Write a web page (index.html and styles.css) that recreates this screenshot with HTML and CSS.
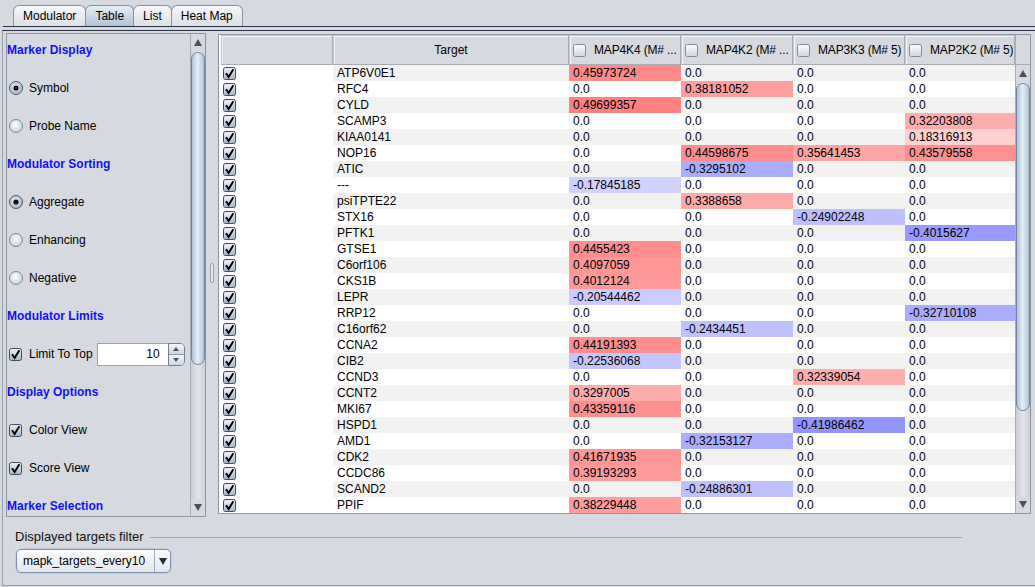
FILE: index.html
```html
<!DOCTYPE html>
<html>
<head>
<meta charset="utf-8">
<link rel="stylesheet" href="styles.css">
</head>
<body>
<svg class="defs" width="0" height="0">
  <defs>
    <linearGradient id="gcb" x1="0" y1="0" x2="0" y2="1">
      <stop offset="0" stop-color="#eef2f6"/>
      <stop offset="1" stop-color="#aab6c6"/>
    </linearGradient>
    <linearGradient id="gcbe" x1="0" y1="0" x2="0" y2="1">
      <stop offset="0" stop-color="#fbfcfd"/>
      <stop offset="1" stop-color="#d3d8df"/>
    </linearGradient>
    <radialGradient id="grd" cx="0.45" cy="0.4" r="0.6">
      <stop offset="0" stop-color="#ffffff"/>
      <stop offset="1" stop-color="#c9cfd8"/>
    </radialGradient>
    <radialGradient id="grs" cx="0.45" cy="0.4" r="0.6">
      <stop offset="0" stop-color="#eef1f5"/>
      <stop offset="1" stop-color="#a9b4c3"/>
    </radialGradient>
    <symbol id="chk" viewBox="0 0 13 13">
      <rect x="0.5" y="0.5" width="12" height="12" rx="2" fill="url(#gcb)" stroke="#3f4c60"/>
      <path d="M3 6.3 L5.6 10 L10.4 2.3" fill="none" stroke="#000" stroke-width="2" stroke-linejoin="miter"/>
    </symbol>
    <symbol id="unchk" viewBox="0 0 13 13">
      <rect x="0.5" y="0.5" width="12" height="12" rx="2" fill="url(#gcbe)" stroke="#7f8a9a"/>
    </symbol>
    <symbol id="rsel" viewBox="0 0 14 14">
      <circle cx="7" cy="7" r="6.5" fill="url(#grs)" stroke="#4b5668"/>
      <circle cx="7" cy="7" r="2.6" fill="#111"/>
    </symbol>
    <symbol id="roff" viewBox="0 0 14 14">
      <circle cx="7" cy="7" r="6.5" fill="url(#grd)" stroke="#7d8797"/>
    </symbol>
  </defs>
</svg>

<div class="tabs">
  <div class="tab">Modulator</div>
  <div class="tab sel">Table</div>
  <div class="tab">List</div>
  <div class="tab">Heat Map</div>
</div>

<div class="content">
  <div class="split">
    <div class="leftbox">
      <div class="opts">
        <div class="sec">Marker Display</div>
        <div class="opt"><svg class="rad" viewBox="0 0 14 14"><use href="#rsel"/></svg>Symbol</div>
        <div class="opt"><svg class="rad" viewBox="0 0 14 14"><use href="#roff"/></svg>Probe Name</div>
        <div class="sec">Modulator Sorting</div>
        <div class="opt"><svg class="rad" viewBox="0 0 14 14"><use href="#rsel"/></svg>Aggregate</div>
        <div class="opt"><svg class="rad" viewBox="0 0 14 14"><use href="#roff"/></svg>Enhancing</div>
        <div class="opt"><svg class="rad" viewBox="0 0 14 14"><use href="#roff"/></svg>Negative</div>
        <div class="sec">Modulator Limits</div>
        <div class="opt"><svg class="chkb" viewBox="0 0 13 13"><use href="#chk"/></svg>Limit To Top
          <div class="spinner"><div class="spin-field">10</div><div class="spin-btns"><div class="sb"><i class="tri up small"></i></div><div class="sb"><i class="tri down small"></i></div></div></div>
        </div>
        <div class="sec">Display Options</div>
        <div class="opt"><svg class="chkb" viewBox="0 0 13 13"><use href="#chk"/></svg>Color View</div>
        <div class="opt"><svg class="chkb" viewBox="0 0 13 13"><use href="#chk"/></svg>Score View</div>
        <div class="sec">Marker Selection</div>
      </div>
      <div class="vsb vsb-left">
        <div class="arrow"><i class="tri up"></i></div>
        <div class="track"><div class="thumb thumb-left"></div></div>
        <div class="arrow"><i class="tri down"></i></div>
      </div>
    </div>

    <div class="divider"><div class="grip"></div></div>

    <div class="pane">
      <div class="thead">
        <div class="th w0"></div>
        <div class="th w1 tgt">Target</div>
        <div class="th w2 mod"><svg class="chkb" viewBox="0 0 13 13"><use href="#unchk"/></svg><span>MAP4K4 (M# ...</span></div>
        <div class="th w2 mod"><svg class="chkb" viewBox="0 0 13 13"><use href="#unchk"/></svg><span>MAP4K2 (M# ...</span></div>
        <div class="th w2 mod"><svg class="chkb" viewBox="0 0 13 13"><use href="#unchk"/></svg><span>MAP3K3 (M# 5)</span></div>
        <div class="th w3 mod"><svg class="chkb" viewBox="0 0 13 13"><use href="#unchk"/></svg><span>MAP2K2 (M# 5)</span></div>
      </div>
      <div class="corner"></div>
      <div class="tbody">
        <table class="data">
          <colgroup><col class="cw0"><col class="cw1"><col class="cw2"><col class="cw2"><col class="cw2"><col class="cw3"></colgroup>
          <tbody>
            <tr><td class="c0"><svg class="cbx" viewBox="0 0 13 13"><use href="#chk"/></svg></td><td>ATP6V0E1</td><td style="background:#ff8a8a">0.45973724</td><td>0.0</td><td>0.0</td><td>0.0</td></tr>
            <tr><td class="c0"><svg class="cbx" viewBox="0 0 13 13"><use href="#chk"/></svg></td><td>RFC4</td><td>0.0</td><td style="background:#ff9e9e">0.38181052</td><td>0.0</td><td>0.0</td></tr>
            <tr><td class="c0"><svg class="cbx" viewBox="0 0 13 13"><use href="#chk"/></svg></td><td>CYLD</td><td style="background:#ff8080">0.49699357</td><td>0.0</td><td>0.0</td><td>0.0</td></tr>
            <tr><td class="c0"><svg class="cbx" viewBox="0 0 13 13"><use href="#chk"/></svg></td><td>SCAMP3</td><td>0.0</td><td>0.0</td><td>0.0</td><td style="background:#ffadad">0.32203808</td></tr>
            <tr><td class="c0"><svg class="cbx" viewBox="0 0 13 13"><use href="#chk"/></svg></td><td>KIAA0141</td><td>0.0</td><td>0.0</td><td>0.0</td><td style="background:#ffd0d0">0.18316913</td></tr>
            <tr><td class="c0"><svg class="cbx" viewBox="0 0 13 13"><use href="#chk"/></svg></td><td>NOP16</td><td>0.0</td><td style="background:#ff8d8d">0.44598675</td><td style="background:#ffa4a4">0.35641453</td><td style="background:#ff9090">0.43579558</td></tr>
            <tr><td class="c0"><svg class="cbx" viewBox="0 0 13 13"><use href="#chk"/></svg></td><td>ATIC</td><td>0.0</td><td style="background:#ababff">-0.3295102</td><td>0.0</td><td>0.0</td></tr>
            <tr><td class="c0"><svg class="cbx" viewBox="0 0 13 13"><use href="#chk"/></svg></td><td>---</td><td style="background:#d1d1ff">-0.17845185</td><td>0.0</td><td>0.0</td><td>0.0</td></tr>
            <tr><td class="c0"><svg class="cbx" viewBox="0 0 13 13"><use href="#chk"/></svg></td><td>psiTPTE22</td><td>0.0</td><td style="background:#ffa9a9">0.3388658</td><td>0.0</td><td>0.0</td></tr>
            <tr><td class="c0"><svg class="cbx" viewBox="0 0 13 13"><use href="#chk"/></svg></td><td>STX16</td><td>0.0</td><td>0.0</td><td style="background:#bfbfff">-0.24902248</td><td>0.0</td></tr>
            <tr><td class="c0"><svg class="cbx" viewBox="0 0 13 13"><use href="#chk"/></svg></td><td>PFTK1</td><td>0.0</td><td>0.0</td><td>0.0</td><td style="background:#9999ff">-0.4015627</td></tr>
            <tr><td class="c0"><svg class="cbx" viewBox="0 0 13 13"><use href="#chk"/></svg></td><td>GTSE1</td><td style="background:#ff8d8d">0.4455423</td><td>0.0</td><td>0.0</td><td>0.0</td></tr>
            <tr><td class="c0"><svg class="cbx" viewBox="0 0 13 13"><use href="#chk"/></svg></td><td>C6orf106</td><td style="background:#ff9696">0.4097059</td><td>0.0</td><td>0.0</td><td>0.0</td></tr>
            <tr><td class="c0"><svg class="cbx" viewBox="0 0 13 13"><use href="#chk"/></svg></td><td>CKS1B</td><td style="background:#ff9999">0.4012124</td><td>0.0</td><td>0.0</td><td>0.0</td></tr>
            <tr><td class="c0"><svg class="cbx" viewBox="0 0 13 13"><use href="#chk"/></svg></td><td>LEPR</td><td style="background:#cbcbff">-0.20544462</td><td>0.0</td><td>0.0</td><td>0.0</td></tr>
            <tr><td class="c0"><svg class="cbx" viewBox="0 0 13 13"><use href="#chk"/></svg></td><td>RRP12</td><td>0.0</td><td>0.0</td><td>0.0</td><td style="background:#acacff">-0.32710108</td></tr>
            <tr><td class="c0"><svg class="cbx" viewBox="0 0 13 13"><use href="#chk"/></svg></td><td>C16orf62</td><td>0.0</td><td style="background:#c1c1ff">-0.2434451</td><td>0.0</td><td>0.0</td></tr>
            <tr><td class="c0"><svg class="cbx" viewBox="0 0 13 13"><use href="#chk"/></svg></td><td>CCNA2</td><td style="background:#ff8e8e">0.44191393</td><td>0.0</td><td>0.0</td><td>0.0</td></tr>
            <tr><td class="c0"><svg class="cbx" viewBox="0 0 13 13"><use href="#chk"/></svg></td><td>CIB2</td><td style="background:#c6c6ff">-0.22536068</td><td>0.0</td><td>0.0</td><td>0.0</td></tr>
            <tr><td class="c0"><svg class="cbx" viewBox="0 0 13 13"><use href="#chk"/></svg></td><td>CCND3</td><td>0.0</td><td>0.0</td><td style="background:#ffadad">0.32339054</td><td>0.0</td></tr>
            <tr><td class="c0"><svg class="cbx" viewBox="0 0 13 13"><use href="#chk"/></svg></td><td>CCNT2</td><td style="background:#ffabab">0.3297005</td><td>0.0</td><td>0.0</td><td>0.0</td></tr>
            <tr><td class="c0"><svg class="cbx" viewBox="0 0 13 13"><use href="#chk"/></svg></td><td>MKI67</td><td style="background:#ff9090">0.43359116</td><td>0.0</td><td>0.0</td><td>0.0</td></tr>
            <tr><td class="c0"><svg class="cbx" viewBox="0 0 13 13"><use href="#chk"/></svg></td><td>HSPD1</td><td>0.0</td><td>0.0</td><td style="background:#9494ff">-0.41986462</td><td>0.0</td></tr>
            <tr><td class="c0"><svg class="cbx" viewBox="0 0 13 13"><use href="#chk"/></svg></td><td>AMD1</td><td>0.0</td><td style="background:#adadff">-0.32153127</td><td>0.0</td><td>0.0</td></tr>
            <tr><td class="c0"><svg class="cbx" viewBox="0 0 13 13"><use href="#chk"/></svg></td><td>CDK2</td><td style="background:#ff9595">0.41671935</td><td>0.0</td><td>0.0</td><td>0.0</td></tr>
            <tr><td class="c0"><svg class="cbx" viewBox="0 0 13 13"><use href="#chk"/></svg></td><td>CCDC86</td><td style="background:#ff9b9b">0.39193293</td><td>0.0</td><td>0.0</td><td>0.0</td></tr>
            <tr><td class="c0"><svg class="cbx" viewBox="0 0 13 13"><use href="#chk"/></svg></td><td>SCAND2</td><td>0.0</td><td style="background:#c0c0ff">-0.24886301</td><td>0.0</td><td>0.0</td></tr>
            <tr><td class="c0"><svg class="cbx" viewBox="0 0 13 13"><use href="#chk"/></svg></td><td>PPIF</td><td style="background:#ff9d9d">0.38229448</td><td>0.0</td><td>0.0</td><td>0.0</td></tr>
          </tbody>
        </table>
      </div>
      <div class="vsb vsb-right">
        <div class="arrow"><i class="tri up"></i></div>
        <div class="track"><div class="thumb thumb-right"></div></div>
        <div class="arrow"><i class="tri down"></i></div>
      </div>
    </div>
  </div>

  <div class="filter">
    <div class="ftitle"><span class="ftext">Displayed targets filter</span><div class="fline"></div></div>
    <div class="combo"><span class="ctext">mapk_targets_every10</span><span class="cbtn"><i class="tri down dark"></i></span></div>
  </div>
</div>
</body>
</html>
```

FILE: styles.css
```css
* { box-sizing: border-box; }

html, body {
  margin: 0;
  padding: 0;
}

body {
  width: 1035px;
  height: 587px;
  overflow: hidden;
  background: #d6d9df;
  font-family: "Liberation Sans", Arial, sans-serif;
  font-size: 12px;
  color: #000;
}

.defs {
  display: block;
  width: 0;
  height: 0;
  overflow: hidden;
}

/* ---------- tabs ---------- */
.tabs {
  height: 27px;
  margin-left: 3px;
  padding-left: 10px;
  border-bottom: 1px solid #2b3344;
  display: flex;
  align-items: flex-end;
}

.tab {
  height: 21px;
  line-height: 20px;
  padding: 0 9px;
  border: 1px solid #8a919e;
  border-bottom: none;
  border-radius: 6px 6px 0 0;
  background: linear-gradient(#f6f7f9, #dcdfe4);
  margin-right: -1px;
  white-space: nowrap;
}

.tab.sel {
  background: linear-gradient(#e6edf4, #afc3d7);
}

/* ---------- content ---------- */
.content {
  margin: 3px 0 0 2px;
  height: 556px;
  border-top: 1px solid #2b3344;
  border-left: 1px solid #9aa0aa;
  border-bottom: 1px solid #9aa0aa;
  padding: 2px 4px 0 3px;
}

.split {
  display: flex;
  height: 484px;
}

/* ---------- left panel ---------- */
.leftbox {
  width: 200px;
  height: 484px;
  border: 1px solid #8f96a3;
  display: flex;
}

.opts {
  flex: 1;
  overflow: hidden;
  padding-top: 8px;
  display: flex;
  flex-direction: column;
  gap: 22px;
}

.sec {
  height: 16px;
  line-height: 16px;
  font-weight: bold;
  color: #1010ff;
  white-space: nowrap;
}

.opt {
  height: 16px;
  display: flex;
  align-items: center;
  padding-left: 2px;
  white-space: nowrap;
}

.rad {
  width: 14px;
  height: 14px;
  margin-right: 6px;
  flex: none;
}

.chkb {
  width: 13px;
  height: 13px;
  margin-right: 7px;
  flex: none;
}

.spinner {
  display: flex;
  margin-left: 4px;
  height: 23px;
  flex: none;
}

.spin-field {
  width: 71px;
  height: 23px;
  background: #fff;
  border: 1px solid #9aa1ad;
  border-right: none;
  text-align: right;
  padding-right: 8px;
  line-height: 21px;
}

.spin-btns {
  width: 17px;
  display: flex;
  flex-direction: column;
  border: 1px solid #6f7f96;
  border-radius: 0 5px 5px 0;
  overflow: hidden;
}

.sb {
  flex: 1;
  display: flex;
  align-items: center;
  justify-content: center;
  background: linear-gradient(#f4f6f8, #cfd6df);
}

.sb + .sb {
  border-top: 1px solid #8f9cae;
}

/* triangles */
.tri {
  display: block;
  width: 0;
  height: 0;
  border-left: 4px solid transparent;
  border-right: 4px solid transparent;
}

.tri.up { border-bottom: 7px solid #4b5059; }
.tri.down { border-top: 7px solid #4b5059; }
.tri.small.up { border-left-width: 3px; border-right-width: 3px; border-bottom-width: 4px; }
.tri.small.down { border-left-width: 3px; border-right-width: 3px; border-top-width: 4px; }
.tri.dark.down { border-top-color: #2a2e35; border-left-width: 4px; border-right-width: 4px; border-top-width: 7px; }

/* ---------- scrollbars ---------- */
.vsb {
  width: 15px;
  flex: none;
  display: flex;
  flex-direction: column;
  background: linear-gradient(to right, #c9cdd4, #e2e4e8 50%, #cdd1d7);
  border-left: 1px solid #a9aeb6;
}

.arrow {
  height: 17px;
  flex: none;
  display: flex;
  align-items: center;
  justify-content: center;
  background: #d6d9df;
}

.track {
  flex: 1;
  padding-top: 1px;
}

.thumb {
  border: 1px solid #6f86a3;
  border-radius: 8px;
  background: linear-gradient(to right, #aec3d8, #e3edf6 45%, #c5d6e6 80%, #a9bfd5);
}

.thumb-left { height: 313px; }
.thumb-right { height: 328px; }

/* ---------- divider ---------- */
.divider {
  width: 12px;
  display: flex;
  align-items: center;
  justify-content: center;
}

.grip {
  width: 4px;
  height: 20px;
  margin-top: -4px;
  border: 1px solid #979ea9;
  border-radius: 2px;
  background: #e6e8ec;
}

/* ---------- table pane ---------- */
.pane {
  width: 813px;
  height: 480px;
  margin-top: 1px;
  border: 1px solid #8f96a3;
  background: #fff;
  padding-left: 2px;
  display: grid;
  grid-template-columns: 794px 15px;
  grid-template-rows: 30px 448px;
}

.thead {
  display: flex;
  height: 30px;
}

.th {
  height: 30px;
  background: #d6d9df;
  border: 1px solid #c3c8cf;
  border-right-color: #a7adb7;
  border-bottom-color: #a7adb7;
  box-shadow: inset 1px 1px 0 #f1f2f4;
  display: flex;
  align-items: center;
  white-space: nowrap;
  overflow: hidden;
}

.w0 { width: 112px; }
.w1 { width: 236px; }
.w2 { width: 112px; }
.w3 { width: 110px; }

.th.tgt { justify-content: center; }

.th.mod { padding-left: 3px; }
.th.mod .chkb { margin-right: 8px; }
.th.mod span { overflow: hidden; letter-spacing: -0.15px; }

.corner {
  background: #d6d9df;
  border-left: 1px solid #a9aeb6;
  border-bottom: 1px solid #a7adb7;
}

.tbody {
  overflow: hidden;
}

.data {
  width: 794px;
  table-layout: fixed;
  border-collapse: collapse;
  border-spacing: 0;
}

.cw0 { width: 112px; }
.cw1 { width: 236px; }
.cw2 { width: 112px; }
.cw3 { width: 110px; }

.data tr { height: 16px; }

.data td {
  height: 16px;
  padding: 0 4px;
  line-height: 16px;
  white-space: nowrap;
  overflow: hidden;
}

.data tr:nth-child(odd) td {
  background: #f2f2f2;
}

.data td.c0,
.data tr:nth-child(odd) td.c0 {
  background: #fff;
  padding: 0 0 0 2px;
}

.cbx {
  display: block;
  width: 13px;
  height: 13px;
  margin: 2px 0 1px 0;
}

/* ---------- filter ---------- */
.filter {
  padding-left: 9px;
}

.ftitle {
  margin-top: 13px;
  height: 14px;
  display: flex;
  align-items: center;
  width: 947px;
}

.ftext {
  font-size: 13px;
  line-height: 14px;
  white-space: nowrap;
  padding-right: 6px;
  color: #111;
}

.fline {
  flex: 1;
  height: 1px;
  background: #a3a8b0;
}

.combo {
  margin-top: 5px;
  margin-left: 1px;
  width: 155px;
  height: 24px;
  border: 1px solid #7a92b2;
  border-radius: 5px;
  background: linear-gradient(#fdfdfe, #e2e6ec);
  display: flex;
  align-items: stretch;
  box-shadow: 0 0 0 1px #c4cfdc;
}

.ctext {
  flex: 1;
  padding-left: 6px;
  line-height: 22px;
  white-space: nowrap;
}

.cbtn {
  width: 16px;
  border-left: 1px solid #9aa8bb;
  display: flex;
  align-items: center;
  justify-content: center;
}
```
